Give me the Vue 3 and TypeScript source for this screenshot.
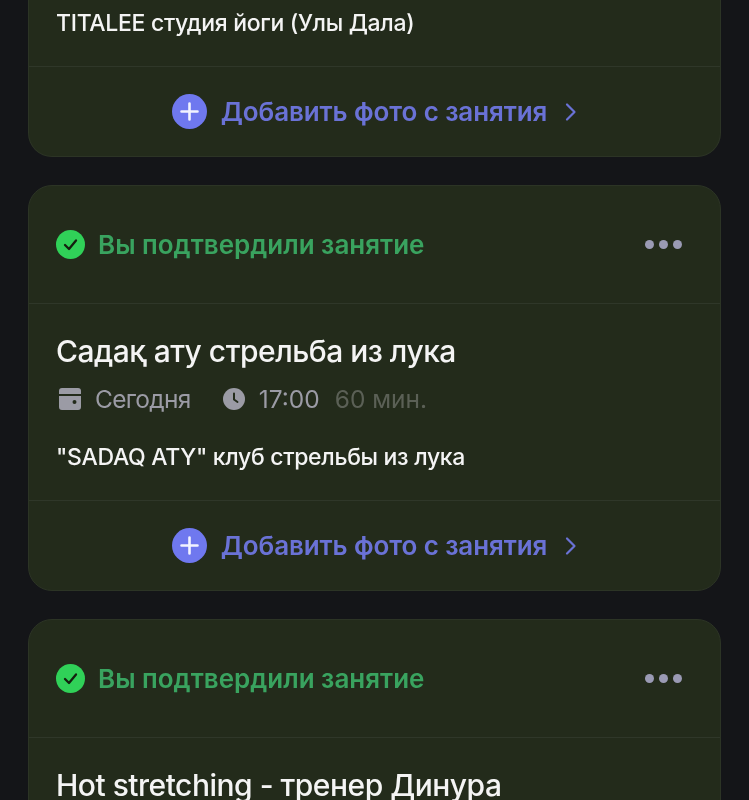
<script setup lang="ts">
interface Lesson {
  title?: string
  date?: string
  time?: string
  duration?: string
  place?: string
  cut?: boolean
  addPhoto: boolean
}

// first and last cards are only partly on screen
const lessons: Lesson[] = [
  { place: 'TITALEE студия йоги (Улы Дала)', cut: true, addPhoto: true },
  {
    title: 'Садақ ату стрельба из лука',
    date: 'Сегодня',
    time: '17:00',
    duration: '60 мин.',
    place: '"SADAQ ATY" клуб стрельбы из лука',
    addPhoto: true,
  },
  { title: 'Hot stretching - тренер Динура', addPhoto: false },
]
</script>

<template>
  <div class="page">
    <section v-for="(item, i) in lessons" :key="i" class="card" :class="{ cut: item.cut }">
      <header v-if="!item.cut" class="status">
        <svg class="check" viewBox="0 0 29 29" width="29" height="29">
          <circle cx="14.500" cy="14.500" r="14.500" fill="#30d158" />
          <path d="M9 15l4 4 7-8.500" fill="none" stroke="#14200f" stroke-width="2.300" stroke-linecap="round" stroke-linejoin="round" />
        </svg>
        <span class="status-text">Вы подтвердили занятие</span>
        <span class="dots"><i></i><i></i><i></i></span>
      </header>

      <div class="body">
        <h2 v-if="item.title" class="title">{{ item.title }}</h2>
        <div v-if="item.date" class="meta">
          <svg class="calendar" viewBox="0 0 22 22" width="22" height="22">
            <path d="M3 0h16a3 3 0 0 1 3 3v3H0V3a3 3 0 0 1 3-3z" fill="#9b9ba5" />
            <path fill-rule="evenodd" d="M0 8h22v11a3 3 0 0 1-3 3H3a3 3 0 0 1-3-3zM15.500 12a2 2 0 1 0 0 4 2 2 0 0 0 0-4z" fill="#9b9ba5" />
          </svg>
          <span class="date">{{ item.date }}</span>
          <svg class="clock" viewBox="0 0 22 22" width="22" height="22">
            <circle cx="11" cy="11" r="11" fill="#9b9ba5" />
            <path d="M11 5.500V11.500l3.500 2.500" fill="none" stroke="#232b1b" stroke-width="2" stroke-linecap="round" stroke-linejoin="round" />
          </svg>
          <span class="time">{{ item.time }}</span>
          <span class="duration">{{ item.duration }}</span>
        </div>
        <p v-if="item.place" class="place">{{ item.place }}</p>
      </div>

      <footer v-if="item.addPhoto" class="add">
        <svg viewBox="0 0 35 35" width="35" height="35">
          <circle cx="17.500" cy="17.500" r="17.500" fill="#6f78ef" />
          <path d="M17.500 9.500v16M9.500 17.500h16" stroke="#f2f3ff" stroke-width="2.600" stroke-linecap="round" />
        </svg>
        <span class="add-text">Добавить фото с занятия</span>
        <svg class="chevron" viewBox="0 0 12 20" width="12" height="20">
          <path d="M2 2.500l7.500 7.500L2 17.500" fill="none" stroke="#6a72d6" stroke-width="2.200" stroke-linecap="round" stroke-linejoin="round" />
        </svg>
      </footer>
    </section>
  </div>
</template>

<style>
html,
body {
  margin: 0;
  background: #141518;
}
</style>

<style scoped>
.page {
  height: 800px;
  overflow: hidden;
  background: #141518;
  padding: 0 28px;
  display: flex;
  flex-direction: column;
  gap: 28px;
  font-family: Inter, "Noto Sans", sans-serif;
  filter: blur(0.5px);
}

.card {
  flex-shrink: 0;
  background: #232b1b;
  border: 1px solid #2c3425;
  border-radius: 24px;
}

.card:last-child {
  min-height: 260px;
}

.cut {
  border-top: 0;
  border-radius: 0 0 24px 24px;
}

.status {
  height: 117px;
  display: flex;
  align-items: center;
  padding: 0 38px 0 27px;
  border-bottom: 1px solid #2f3729;
}

.status-text {
  margin-left: 13px;
  color: #39a35f;
  font-size: 26px;
  font-weight: 600;
}

.dots {
  margin-left: auto;
  display: flex;
  gap: 5px;
}

.dots i {
  width: 9px;
  height: 9px;
  border-radius: 50%;
  background: #9a9ab4;
}

.body {
  padding: 28px 27px 29px;
  border-bottom: 1px solid #2f3729;
}

.cut .body {
  padding-top: 9px;
}

.card:last-child .body {
  border-bottom: 0;
}

.title {
  margin: 0;
  color: #f4f4f4;
  font-size: 30px;
  line-height: 38px;
  font-weight: 550;
  letter-spacing: -0.500px;
}

.meta {
  margin-top: 13px;
  display: flex;
  align-items: center;
  font-size: 24.500px;
  line-height: 32px;
  color: #9b9ba5;
}

.calendar {
  margin-left: 3px;
}

.date {
  margin-left: 14px;
  letter-spacing: -0.700px;
}

.clock {
  margin-left: 32px;
}

.time {
  margin-left: 14px;
}

.duration {
  margin-left: 15px;
  color: #5b6056;
}

.place {
  margin: 28px 0 0;
  color: #f4f4f4;
  font-size: 23px;
  line-height: 28px;
  font-weight: 550;
  letter-spacing: -0.320px;
}

.cut .place {
  margin-top: 0;
}

.add {
  height: 89px;
  display: flex;
  align-items: center;
  justify-content: center;
}

.add-text {
  margin-left: 14px;
  color: #6a72d6;
  font-size: 26px;
  font-weight: 600;
  letter-spacing: -0.100px;
}

.chevron {
  margin-left: 18px;
}
</style>
